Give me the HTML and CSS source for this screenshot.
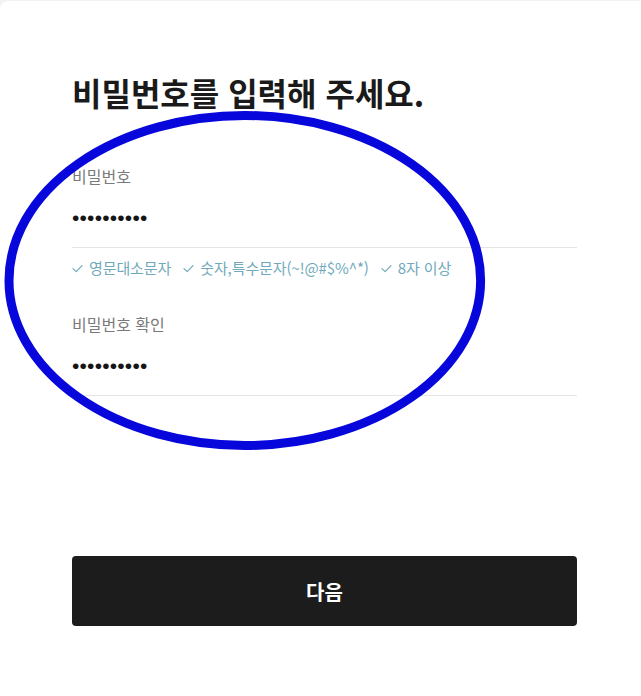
FILE: index.html
```html
<!DOCTYPE html>
<html lang="ko">
<head>
<meta charset="utf-8">
<title>비밀번호 입력</title>
<link rel="stylesheet" href="styles.css">
</head>
<body>
<main class="card">
  <h1 class="title">비밀번호를 입력해 주세요.</h1>
  <div class="field">
    <div class="label">비밀번호</div>
    <div class="input"><span class="dots">••••••••••</span></div>
  </div>
  <ul class="rules">
    <li class="rule"><svg class="check" viewBox="0 0 11 9" width="11" height="9"><path d="M1 4.6 L4.2 7.6 L10 1.6" /></svg>영문대소문자</li>
    <li class="rule"><svg class="check" viewBox="0 0 11 9" width="11" height="9"><path d="M1 4.6 L4.2 7.6 L10 1.6" /></svg>숫자,특수문자(~!@#$%^*)</li>
    <li class="rule"><svg class="check" viewBox="0 0 11 9" width="11" height="9"><path d="M1 4.6 L4.2 7.6 L10 1.6" /></svg>8자 이상</li>
  </ul>
  <div class="field field-second">
    <div class="label">비밀번호 확인</div>
    <div class="input"><span class="dots">••••••••••</span></div>
  </div>
  <button class="next" type="button">다음</button>
</main>
<svg class="mark" width="641" height="696" viewBox="0 0 641 696"><ellipse cx="244.8" cy="280.5" rx="235.8" ry="165" /></svg>
</body>
</html>
```

FILE: styles.css
```css
html, body {
  margin: 0;
  padding: 0;
}
body {
  background: #f3f3f3;
  font-family: "Noto Sans CJK KR", "Noto Sans", sans-serif;
  position: relative;
  height: 696px;
  overflow: hidden;
}
.card {
  margin-top: 1px;
  background: #ffffff;
  border-top-left-radius: 8px;
  min-height: 695px;
  padding: 70px 64px 0 72px;
  box-sizing: border-box;
  display: flex;
  flex-direction: column;
}
.title {
  margin: 0;
  font-size: 32px;
  line-height: 42px;
  font-weight: 700;
  color: #1a1a1a;
  letter-spacing: 0;
}
.field {
  margin-top: 52px;
  display: flex;
  flex-direction: column;
}
.field-second {
  margin-top: 35px;
}
.label {
  font-size: 16px;
  line-height: 22px;
  color: #7a7a7a;
}
.input {
  height: 60px;
  border-bottom: 1px solid #e4e4e4;
  display: flex;
  align-items: center;
}
.dots {
  font-family: "Liberation Sans", Arial, sans-serif;
  font-size: 21px;
  letter-spacing: 0.2px;
  font-weight: 400;
  color: #151515;
  line-height: 1;
}
.rules {
  list-style: none;
  margin: 10px 0 0 0;
  padding: 0;
  display: flex;
  gap: 12px;
}
.rule {
  display: flex;
  align-items: center;
  gap: 6px;
  font-size: 15px;
  line-height: 20px;
  color: #70a9bc;
  letter-spacing: -0.1px;
}
.check {
  fill: none;
  stroke: #70a9bc;
  stroke-width: 1.2;
  stroke-linecap: round;
  stroke-linejoin: round;
  margin-top: 1px;
}
.next {
  margin-top: 160px;
  height: 70px;
  border: 0;
  border-radius: 4px;
  background: #1c1c1c;
  color: #ffffff;
  font-family: "Noto Sans CJK KR", "Noto Sans", sans-serif;
  font-size: 20px;
  font-weight: 700;
  cursor: pointer;
}
.mark {
  position: absolute;
  left: 0;
  top: 0;
  pointer-events: none;
}
.mark ellipse {
  fill: none;
  stroke: #0707dc;
  stroke-width: 9;
}
```
